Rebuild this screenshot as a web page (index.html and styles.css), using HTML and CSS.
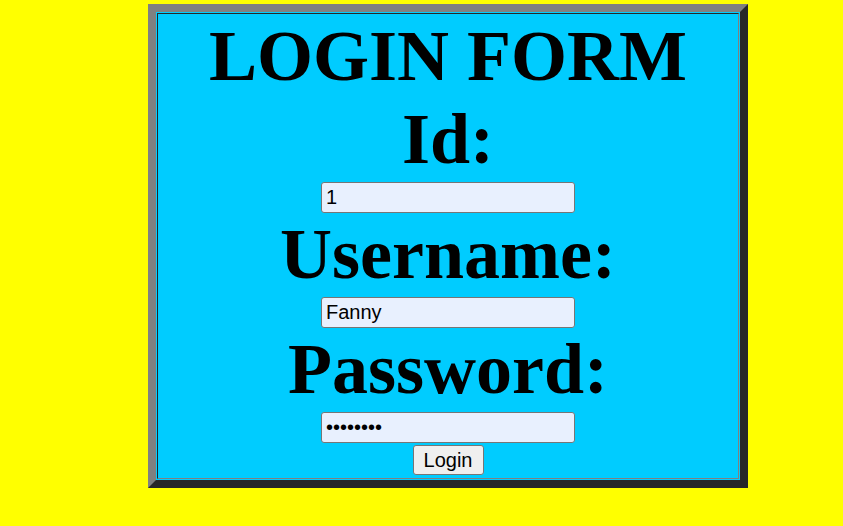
FILE: index.html
```html
<!DOCTYPE html>
<html>
<head>
<meta charset="utf-8">
<link rel="stylesheet" href="styles.css">
</head>
<body>
<div class="frame">
  <div class="cell">
    <div class="label">LOGIN FORM</div>
    <div class="label">Id:</div>
    <div class="field"><input class="inp" type="text" value="1"></div>
    <div class="label">Username:</div>
    <div class="field"><input class="inp" type="text" value="Fanny"></div>
    <div class="label">Password:</div>
    <div class="field"><input class="inp" type="password" value="12345678"></div>
    <div class="actions"><button class="btn" type="button">Login</button></div>
  </div>
</div>
</body>
</html>
```
FILE: styles.css
```css
html, body {
  margin: 0;
  padding: 0;
  background: #ffff00;
}
body {
  padding: 4px 0 0 148px;
  height: 526px;
  box-sizing: border-box;
}
.frame {
  width: 600px;
  height: 484px;
  box-sizing: border-box;
  border: 8px solid;
  border-color: #808080 #282828 #282828 #808080;
  padding: 1px;
  background: #00ccff;
}
.cell {
  height: 466px;
  box-sizing: border-box;
  border: 1px solid;
  border-color: #282828 #808080 #808080 #282828;
  padding: 1px;
  text-align: center;
}
.label {
  font-family: "Liberation Serif", "Times New Roman", serif;
  font-weight: bold;
  font-size: 72px;
  line-height: 83px;
  height: 83px;
  color: #000;
  white-space: nowrap;
}
.field {
  height: 32px;
  box-sizing: border-box;
  padding-top: 1px;
  display: flex;
  justify-content: center;
}
.inp {
  width: 254px;
  height: 31px;
  box-sizing: border-box;
  margin: 0;
  border: 1px solid #767676;
  border-radius: 3px;
  background: #e8f0fe;
  font-family: "Liberation Sans", Arial, sans-serif;
  font-size: 20px;
  color: #000;
  padding: 0 4px;
  outline: none;
}
.actions {
  display: flex;
  justify-content: center;
  padding-top: 2px;
}
.btn {
  width: 71px;
  height: 30px;
  box-sizing: border-box;
  margin: 0;
  border: 1px solid #767676;
  border-radius: 3px;
  background: #efefef;
  font-family: "Liberation Sans", Arial, sans-serif;
  font-size: 20px;
  color: #000;
  padding: 0;
}
```
